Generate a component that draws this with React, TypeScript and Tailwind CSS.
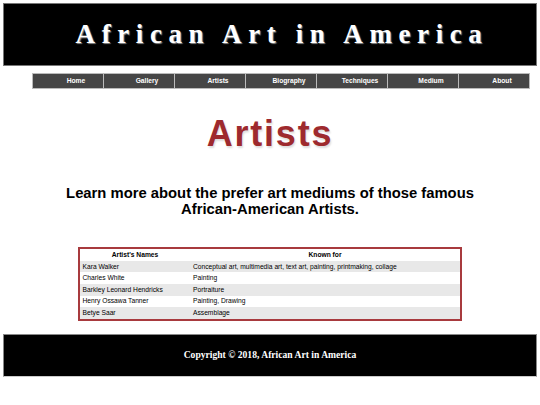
import React from "react"

const navItems = ["Home", "Gallery", "Artists", "Biography", "Techniques", "Medium", "About"]

const artists = [
  { name: "Kara Walker", known: "Conceptual art, multimedia art, text art, painting, printmaking, collage" },
  { name: "Charles White", known: "Painting" },
  { name: "Barkley Leonard Hendricks", known: "Portraiture" },
  { name: "Henry Ossawa Tanner", known: "Painting, Drawing" },
  { name: "Betye Saar", known: "Assemblage" },
]

export default function App() {
  return (
    <div className="w-[540px] h-[405px] bg-white overflow-hidden font-['Liberation_Sans',Arial,sans-serif]">
      <header className="mx-[3px] mt-[3px] h-[63px] bg-black border border-[#777] flex items-center justify-center">
        <h1 className="pl-[24px] text-white font-['Liberation_Serif','Times_New_Roman',serif] font-bold text-[27px] tracking-[6.6px] leading-none [text-shadow:1px_1px_1px_#888]">
          African Art in America
        </h1>
      </header>

      <nav className="mt-[7px] ml-[32px] mr-[10px] h-[16px] flex border border-[#bbb] bg-[#464646]">
        {navItems.map((item, i) => (
          <div
            key={item}
            className={`flex-1 flex items-center justify-center pl-[16px] text-white font-bold text-[6.7px] ${i > 0 ? "border-l border-[#bbb]" : ""}`}
          >
            {item}
          </div>
        ))}
      </nav>

      <h2 className="mt-[27px] text-center text-[36px] leading-[36px] font-bold tracking-[1.8px] text-[#9e2a2e] [text-shadow:1px_2px_2px_#ddd]">
        Artists
      </h2>

      <p className="mt-[33px] text-center text-[14.8px] leading-[16px] font-bold text-black">
        Learn more about the prefer art mediums of those famous
        <br />
        African-American Artists.
      </p>

      <div className="mt-[30px] mx-auto w-[384px] border-2 border-[#a83a3e]">
        <table className="w-full border-collapse text-[6.7px] text-black">
          <thead>
            <tr className="h-[11.8px]">
              <th className="w-[110px] px-[2.5px] font-bold text-center">Artist's Names</th>
              <th className="px-[2.5px] font-bold text-center">Known for</th>
            </tr>
          </thead>
          <tbody>
            {artists.map((a, i) => (
              <tr key={a.name} className={`h-[11.6px] ${i % 2 === 0 ? "bg-[#e8e8e8]" : "bg-white"}`}>
                <td className="px-[2.5px] text-left">{a.name}</td>
                <td className="px-[3px] text-left">{a.known}</td>
              </tr>
            ))}
          </tbody>
        </table>
      </div>

      <footer className="mx-[3px] mt-[13px] h-[43px] bg-black border border-[#888] border-b-[#ccc] flex items-center justify-center">
        <span className="text-white font-bold text-[9.6px] font-['Liberation_Serif','Times_New_Roman',serif]">
          Copyright © 2018, African Art in America
        </span>
      </footer>
    </div>
  )
}
